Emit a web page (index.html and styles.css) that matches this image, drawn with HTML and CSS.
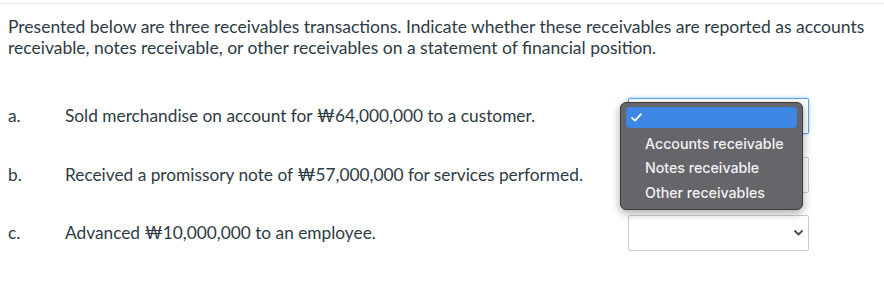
FILE: index.html
```html
<!DOCTYPE html>
<html lang="en">
<head>
<meta charset="utf-8">
<title>Receivables</title>
<link rel="stylesheet" href="styles.css">
</head>
<body>
<div class="page">
  <div class="rule"></div>
  <p class="intro">Presented below are three receivables transactions. Indicate whether these receivables are reported as accounts receivable, notes receivable, or other receivables on a statement of financial position.</p>
  <div class="rows">
    <div class="label">a.</div>
    <div class="desc">Sold merchandise on account for ₩64,000,000 to a customer.</div>
    <div class="select-wrap">
      <div class="select focused"></div>
      <div class="popup">
        <div class="item selected"><svg class="check" width="11" height="9" viewBox="0 0 11 9"><path d="M1 4.8 L4 7.6 L10 1.2" fill="none" stroke="#fff" stroke-width="1.7" stroke-linecap="round" stroke-linejoin="round"/></svg></div>
        <div class="item">Accounts receivable</div>
        <div class="item">Notes receivable</div>
        <div class="item">Other receivables</div>
      </div>
    </div>

    <div class="label">b.</div>
    <div class="desc">Received a promissory note of ₩57,000,000 for services performed.</div>
    <div class="select-wrap">
      <div class="select"><svg class="chev" width="9" height="6" viewBox="0 0 9 6"><path d="M1 1 L4.5 4.5 L8 1" fill="none" stroke="#4a4a4a" stroke-width="1.8" stroke-linecap="round" stroke-linejoin="round"/></svg></div>
    </div>

    <div class="label">c.</div>
    <div class="desc">Advanced ₩10,000,000 to an employee.</div>
    <div class="select-wrap">
      <div class="select"><svg class="chev" width="9" height="6" viewBox="0 0 9 6"><path d="M1 1 L4.5 4.5 L8 1" fill="none" stroke="#4a4a4a" stroke-width="1.8" stroke-linecap="round" stroke-linejoin="round"/></svg></div>
    </div>
  </div>
</div>
</body>
</html>
```
FILE: styles.css
```css
html, body {
  margin: 0;
  padding: 0;
  background: #ffffff;
}
.page {
  width: 884px;
  height: 286px;
  font-family: Lato, "Liberation Sans", sans-serif;
  color: #2d3b45;
  font-size: 17.3px;
  overflow: hidden;
}
.rule {
  margin-top: 3px;
  height: 0;
  border-top: 1px solid #e6e8ea;
}
.intro {
  margin: 11.5px 0 0 0;
  padding: 0 8px;
  font-size: 17.5px;
  line-height: 21px;
}
.rows {
  margin-top: 40.5px;
  display: grid;
  grid-template-columns: 57px 563px 181px;
  grid-auto-rows: 36px;
  row-gap: 22.5px;
  padding-left: 8px;
  align-items: center;
}
.label {
  line-height: 20px;
}
.desc {
  line-height: 20px;
}
.select-wrap {
  position: relative;
  height: 36px;
}
.select {
  box-sizing: border-box;
  height: 36px;
  width: 181px;
  border: 1px solid #c7cdd1;
  border-radius: 2px;
  background: #fff;
  position: relative;
  display: flex;
  align-items: center;
  justify-content: flex-end;
  padding-right: 5px;
}
.select.focused {
  border-color: #58a6ee;
  box-shadow: 0 0 3px 1px rgba(88, 166, 238, 0.35);
}
.chev {
  display: block;
}
.popup {
  position: absolute;
  left: -8px;
  top: 4px;
  width: 183px;
  height: 108px;
  box-sizing: border-box;
  background: #66656a;
  border: 1px solid #3c3c3e;
  border-radius: 6px;
  box-shadow: 0 3px 10px rgba(0, 0, 0, 0.35);
  padding: 4px 5px;
  font-family: Inter, "Noto Sans", sans-serif;
  font-size: 14.2px;
  font-weight: 500;
  color: #f2f2f2;
  z-index: 2;
}
.item {
  height: 24.5px;
  line-height: 24.5px;
  padding-left: 19px;
}
.item.selected {
  height: 21px;
  margin-bottom: 3.5px;
  background: #3d86e3;
  border-radius: 4px;
  padding-left: 5px;
  display: flex;
  align-items: center;
}
.check {
  display: block;
}
```
